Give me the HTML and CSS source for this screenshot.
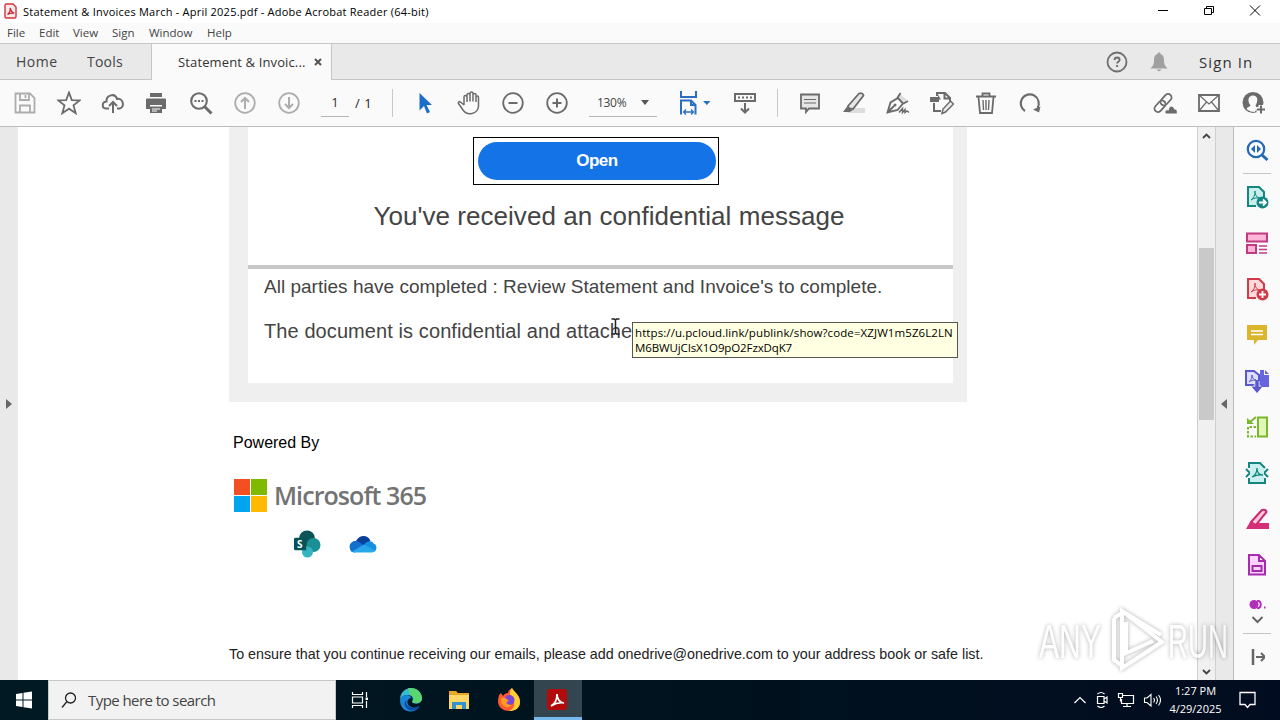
FILE: index.html
```html
<!DOCTYPE html>
<html lang="en">
<head>
  <meta charset="UTF-8">
  <title>Statement &amp; Invoices March - April 2025.pdf - Adobe Acrobat Reader (64-bit)</title>
  <link rel="stylesheet" href="styles.css">
</head>
<body>

  <!-- Title bar -->
  <header class="titlebar">
    <svg class="app-icon" width="13" height="16" viewBox="0 0 13 16"><path d="M1 2.5Q1 1 2.5 1H9l3 3v9.500q0 1.500-1.500 1.500h-8Q1 15 1 13.500z" fill="#fde9e9" stroke="#d2333b" stroke-width="1.400"/><path d="M3.500 11.500C5.500 10 6.500 7.500 6.200 5c1 3.500 2 4.800 4 5.200-2.500-.4-4.500 0-6.700 1.300z" fill="none" stroke="#c9202a" stroke-width="1.200"/></svg>
    <span class="window-title">Statement &amp; Invoices March - April 2025.pdf - Adobe Acrobat Reader (64-bit)</span>
    <div class="window-buttons">
      <svg width="46" height="22" viewBox="0 0 46 22"><path d="M18 10.500h10" stroke="#000"/></svg>
      <svg width="46" height="22" viewBox="0 0 46 22"><path d="M18.500 8.500h7v6h-7zM20.500 8.500v-2h7v6h-2" fill="none" stroke="#000"/></svg>
      <svg width="46" height="22" viewBox="0 0 46 22"><path d="M18 5.500l10 10M28 5.500l-10 10" stroke="#000"/></svg>
    </div>
  </header>

  <nav class="menubar">
    <span class="m-file">File</span><span class="m-edit">Edit</span><span class="m-view">View</span><span class="m-sign">Sign</span><span class="m-window">Window</span><span class="m-help">Help</span>
  </nav>

  <!-- Tabs -->
  <div class="tabbar">
    <span class="tab-home">Home</span>
    <span class="tab-tools">Tools</span>
    <div class="tab-doc"><span>Statement &amp; Invoic...</span>
      <svg width="8" height="8" viewBox="0 0 8 8"><path d="M1 1l6 6M7 1L1 7" stroke="#555" stroke-width="2"/></svg>
    </div>
    <div class="account">
      <svg width="22" height="22" viewBox="0 0 22 22"><circle cx="11" cy="11" r="9.500" fill="none" stroke="#6e6e6e" stroke-width="1.800"/><path d="M8.600 9c0-3.300 5-3.300 5 0 0 1.800-2.500 1.800-2.500 3.500M11.100 14v2" fill="none" stroke="#6e6e6e" stroke-width="1.900"/></svg>
      <svg width="18" height="22" viewBox="0 0 18 22"><path d="M9 1.500c1 0 1.500.6 1.500 1.500C13.500 4 14 6.500 14 10c0 3.500 1.200 5 3.500 7.500H.5C2.800 15 4 13.500 4 10c0-3.500.5-6 3.500-7 0-.9.500-1.500 1.500-1.500zM6.500 18.500h5Q9 22 6.500 18.500z" fill="#a0a0a0"/></svg>
      <span class="sign-in">Sign In</span>
    </div>
  </div>

  <!-- Main toolbar -->
  <div class="toolbar">
    <div class="tools tools-file">
      <svg class="muted" viewBox="0 0 24 24"><path d="M2.500 2.500h14.500l4.500 4.500v14.500h-19zM7 2.500v6.500h9V2.500M12.500 4v3M7 21.500v-7h10v7"/></svg>
      <svg viewBox="0 0 24 24"><path d="M12 1.500l2.800 7.600 7.900.3-6.200 5 2.200 7.800L12 17.700l-6.700 4.500 2.200-7.800-6.200-5 7.900-.3z"/></svg>
      <svg viewBox="0 0 24 24"><path d="M8 17.500H5.500C.5 17.500.5 11 5.500 10.500 5 4 14 1.500 16 8c6-1.500 8.500 8.500 2.500 9.500H16M12 22V11.500M8 15l4-4 4 4" stroke-width="2"/></svg>
      <svg viewBox="0 0 24 24"><path d="M5 2h12v4H5zM1 8.500Q1 7.500 2 7.500h18q1 0 1 1v9.500h-4v-4H5v4H1zM5 15.500h12v6.500H5z" fill="#6b6b6b" stroke="none"/><path d="M7 18h8M7 20h5" stroke="#fff" stroke-width="1"/></svg>
      <svg viewBox="0 0 24 24"><circle cx="10" cy="10" r="7.800" stroke-width="2.100"/><path d="M15.500 15.500l7 7" stroke-width="3"/><path d="M5.500 10h2M9 10h2M12.500 10h2" stroke-width="2"/></svg>
      <svg class="muted" viewBox="0 0 24 24"><circle cx="12" cy="12" r="9.800"/><path d="M12 18V7M8 11l4-4 4 4" stroke-width="2"/></svg>
      <svg class="muted" viewBox="0 0 24 24"><circle cx="12" cy="12" r="9.800"/><path d="M12 6v11M8 13l4 4 4-4" stroke-width="2"/></svg>
    </div>
    <span class="page-field">1</span>
    <span class="page-total">/&nbsp;1</span>
    <i class="divider"></i>
    <div class="tools tools-view">
      <svg viewBox="0 0 24 24"><path d="M6.500 2l12.500 12h-5.500l3.500 7-3 1.500-3-7.500-4.500 4.500z" fill="#1b6fc9" stroke="none"/></svg>
      <svg viewBox="0 0 24 24"><path d="M7 14L3.500 11C2 10 .8 11.500 1.500 12.500L6 19c4 6 15 4.500 15.500-4V6.500c0-2-2.500-2-2.500 0V11 4c0-2-3-2-3 0v6.500V2.500c0-2-3-2-3 0v8V4c0-2-3-2-3 0v7M7 14V6c0-2 3-2 3 0v5" stroke-width="1.500"/></svg>
      <svg viewBox="0 0 24 24"><circle cx="12" cy="12" r="9.800"/><path d="M7.500 12h9" stroke-width="2"/></svg>
      <svg viewBox="0 0 24 24"><circle cx="12" cy="12" r="9.800"/><path d="M7.500 12h9M12 7.500v9" stroke-width="2"/></svg>
    </div>
    <div class="zoom-field"><span>130%</span><svg width="8" height="5" viewBox="0 0 8 5"><path d="M0 0h8L4 5z" fill="#555"/></svg></div>
    <svg class="fit-icon" width="32" height="26" viewBox="0 0 32 26"><path d="M2 1v6h15V1M2 24.500V10.500h10l4.500 4.500v9.500M12 10.500V15h4.500" fill="none" stroke="#2a6fbf" stroke-width="2"/><path d="M4.500 22h10M7 19.500L4.500 22 7 24.500M12 19.500l2.500 2.500-2.500 2.500" fill="none" stroke="#2a6fbf" stroke-width="1.300"/><path d="M24 11h7.500l-3.700 4z" fill="#2a6fbf"/></svg>
    <svg class="scroll-icon" width="24" height="24" viewBox="0 0 24 24"><path d="M2 3h20v7H2zM12 12v9M8 17.500l4 4 4-4" fill="none" stroke="#6b6b6b" stroke-width="2"/><path d="M5 6.500h14" stroke="#6b6b6b" stroke-width="2" stroke-dasharray="2 2"/></svg>
    <i class="divider divider-2"></i>
    <div class="tools">
      <svg viewBox="0 0 24 24"><path d="M3 3.500h18v14H11L8 21v-3.500H3z" fill="#e6e6e6"/><path d="M6 8.500h12M6 12h12" stroke-width="1.200"/></svg>
      <svg viewBox="0 0 24 24"><path d="M9 17h14v5H5z" fill="#ddd" stroke="none"/><path d="M6 15L17 2.500q4-1 4.500 2L11 18l-4-.5z" fill="#e6e6e6"/><path d="M5.500 15l5 4.500-3 1.500H1z" fill="#6b6b6b" stroke="none"/></svg>
      <svg viewBox="0 0 24 24"><path d="M12 6l2-3 7 6-4 3z" fill="#ddd" stroke="none"/><path d="M1.500 21.500l3-10 7.500-4.500 5 5.500-5.500 6.500zM2 21l6-6M11 7.500L14.500 2M17.500 12.500l4.500-2.500" stroke-width="1.900"/><path d="M13 21.500l3.500-4v4l2.500-3v3l2-1.500 2 1.500" stroke-width="1.500"/><circle cx="9" cy="14" r="1.500" fill="#6b6b6b" stroke="none"/></svg>
      <svg viewBox="0 0 24 24"><path d="M7 5V2h8l5 5v3M14.500 2v5.500H20M4 12v8h7" stroke-width="2"/><path d="M0 6h8V3.500l3 5H9V11H0z" fill="#6b6b6b" stroke="none"/><path d="M12 22.500l1-4.500 7.500-8 3 3-8 8z" fill="#eee" stroke-width="1.500"/></svg>
      <svg viewBox="0 0 24 24"><path d="M2 5.500h20M8.500 5V2.500h7V5M4.500 6L6 22h12l1.500-16"/><path d="M9 9l.5 10M12 9v10M15 9l-.5 10" stroke-width="1.400"/></svg>
      <svg viewBox="0 0 24 24"><path d="M7 20A9 9 0 1 1 19.500 17" stroke-width="2.100"/><path d="M22.500 15.500l-1.500 6-6-3z" fill="#6b6b6b" stroke="none"/></svg>
    </div>
    <div class="tools tools-share">
      <svg viewBox="0 0 24 24"><g transform="rotate(-48 10 12)"><rect x="-1" y="8.500" width="13" height="7" rx="3.500"/><rect x="8" y="8.500" width="13" height="7" rx="3.500"/></g><path d="M12.500 23c-2-4 2-4.500 3-4 0-5 5-5 6-1 3.500 0 3.500 5 1.500 5z" fill="#6b6b6b" stroke="#fafafa" stroke-width="1"/></svg>
      <svg viewBox="0 0 24 24"><path d="M2 4h20v16H2z"/><path d="M2 4l10 9 10-9M2 20l7.500-9M22 20l-7.500-9" stroke-width="1.200"/></svg>
      <svg viewBox="0 0 24 24"><circle cx="12" cy="11.500" r="10.500" fill="#6b6b6b" stroke="none"/><path d="M6 18.500c-1-2.500 3-2.500 3.500-4C6 10 7 4.500 12 4.500S17.500 10 14.500 14.500c.5 1.500 2 2 2 3l-3 3.500q-4 0-7.500-2.500z" fill="#fafafa" stroke="none"/><path d="M20 14v9M15.500 18.500h8.500" stroke="#fafafa" stroke-width="5"/><path d="M20 14.500v8M16 18.500h8" stroke-width="2"/></svg>
    </div>
  </div>

  <main class="workspace">
    <aside class="left-pane"><i class="tri tri-right"></i></aside>

    <!-- Document page -->
    <section class="page">
      <div class="mail-frame">
        <div class="mail-card">
          <div class="mail-head">
            <div class="button-frame"><span class="open-button">Open</span></div>
            <h1>You've received an confidential message</h1>
          </div>
          <p class="line-1">All parties have completed : Review Statement and Invoice's to complete.</p>
          <p class="line-2">The document is confidential and attached</p>
        </div>
      </div>
      <p class="powered">Powered By</p>
      <div class="ms-logo">
        <div class="ms-squares"><i class="red"></i><i class="green"></i><i class="blue"></i><i class="yellow"></i></div>
        <span>Microsoft 365</span>
      </div>
      <div class="service-icons">
        <svg width="28" height="28" viewBox="0 0 28 28"><circle cx="14" cy="8.500" r="8" fill="#0b5558"/><circle cx="20.500" cy="15" r="7" fill="#1a8f96"/><circle cx="14.500" cy="22" r="5.500" fill="#35b5c0"/><path d="M2 7.500h11.500v13H2z" fill="#034f52" opacity=".5"/><rect x="1" y="8" width="12" height="12" rx="1" fill="#045457"/><text x="4" y="17.500" class="sp-letter">S</text></svg>
        <svg width="28" height="18" viewBox="0 0 28 18"><path d="M7 6C10-.5 19-1 21.500 6L14 12z" fill="#0a3f9c"/><path d="M1 14c-2-6 4-9 8-7.500l9 5.500-12 5.500c-3 0-4.500-1-5-3.500z" fill="#1370cf"/><path d="M15 9.500c3-4 8-4.500 9.500-1 4 1 4 8-.5 8.500z" fill="#1490df"/><path d="M3 16.500L15 9.500l11 6c-1 1.500-2 2-4 2H6.500q-2 0-3.500-1z" fill="#28a8ea"/></svg>
      </div>
      <p class="footer-note">To ensure that you continue receiving our emails, please add onedrive@onedrive.com to your address book or safe list.</p>
    </section>

    <div class="scrollbar">
      <svg width="9" height="6" viewBox="0 0 9 6"><path d="M1 5l3.500-3.500L8 5" fill="none" stroke="#444" stroke-width="1.800"/></svg>
      <div class="thumb"></div>
      <svg width="9" height="6" viewBox="0 0 9 6"><path d="M1 1l3.500 3.500L8 1" fill="none" stroke="#444" stroke-width="1.800"/></svg>
    </div>
    <div class="right-pane"><i class="tri tri-left"></i></div>

    <!-- Tools rail -->
    <aside class="rail">
      <svg class="first" viewBox="0 0 24 24"><circle cx="11" cy="11" r="8.200" stroke="#2468b8" stroke-width="2.200"/><path d="M17 17l5.500 5" stroke="#2468b8" stroke-width="3"/><path d="M10 7v8l-4-4zM12 7v8l4-4z" fill="#2468b8"/></svg>
      <i class="rail-line"></i>
      <div class="rail-tools">
        <svg viewBox="0 0 24 24"><path d="M11 21H3V2h11l5 5v5" fill="#c9efec" stroke="#14867f" stroke-width="2"/><path d="M6 15c3-2 4-5 4-9 0 4 2 7 5 7-4-.5-6 0-9 2z" stroke="#14867f"/><circle cx="17.500" cy="17.500" r="6" fill="#14867f"/><path d="M14 17.500h6.500M18 14.500l3 3-3 3" stroke="#fff" stroke-width="1.800"/></svg>
        <svg viewBox="0 0 24 24"><path d="M2 2.500h20v8H2zM2 14h9v8H2z" fill="#ffb5d7" stroke="#c23a80" stroke-width="2"/><path d="M14 15h8M14 18.500h8M14 22h8" stroke="#c23a80" stroke-width="1.500"/></svg>
        <svg viewBox="0 0 24 24"><path d="M11 21H3V2h11l5 5v5" fill="#ffdada" stroke="#d13b49" stroke-width="2"/><path d="M6 15c3-2 4-5 4-9 0 4 2 7 5 7-4-.5-6 0-9 2z" stroke="#d13b49"/><circle cx="17.500" cy="17.500" r="6" fill="#d13b49"/><path d="M14 17.500h7M17.500 14v7" stroke="#fff" stroke-width="1.800"/></svg>
        <svg viewBox="0 0 24 24"><path d="M2 2h20v15h-9l-4 5v-5H2z" fill="#dbb52b"/><path d="M6 8h12M6 11.500h12" stroke="#fff" stroke-width="1.700"/></svg>
        <svg viewBox="0 0 24 24"><path d="M1 2h8l5 4v10H1z" fill="#dedeff" stroke="#5a58cf" stroke-width="2"/><path d="M15 1h4v5h5v12h-9z" fill="#6765de"/><path d="M20 1l4 4h-4z" fill="#6765de"/><path d="M4 13c2-2 3-4 3-7 0 3 2 5 4 5-3 0-5 .5-7 2z" stroke="#5a58cf"/><path d="M12 12v10M7 18l5 5 5-5" stroke="#fafafa" stroke-width="5"/><path d="M12 11v11" stroke="#5a58cf" stroke-width="3.500"/><path d="M6.500 17.500h11L12 24z" fill="#5a58cf"/></svg>
        <svg viewBox="0 0 24 24"><path d="M13 2.500h9v19h-9z" fill="#e1f8ba" stroke="#79b82a" stroke-width="2"/><path d="M11 12H3v9.500h8" stroke="#79b82a" stroke-width="2" stroke-dasharray="2.500 1.500"/><path d="M11 2L5 7" stroke="#79b82a" stroke-width="2"/><path d="M2 3v6h7z" fill="#79b82a"/></svg>
        <svg viewBox="0 0 24 24"><path d="M1 8l4 4-4 4M23 8l-4 4 4 4" stroke="#14867f" stroke-width="2"/><path d="M5 3h10l4 4v14H5z" fill="#c9f0ef"/><path d="M4 7V2h11l5 5M4 17v5h16v-5" stroke="#14867f" stroke-width="2"/><path d="M7 16c4-2 5-5 5-9 0 4 2 7 6 7-5-.5-7 0-11 2z" stroke="#14867f" stroke-width="1.300"/></svg>
        <svg viewBox="0 0 24 24"><path d="M12 16h12v6H6z" fill="#d52d78"/><path d="M6 15L17 3q4-1 4.500 2L11 18z" fill="#ffcbe0" stroke="#cf286f" stroke-width="2"/><path d="M5 15l6 4-2 3H1z" fill="#d52d78"/></svg>
        <svg viewBox="0 0 24 24"><path d="M4 2h10l6 6v13.500H4zM14 2v6h6M7.500 13h9v5h-9z" fill="#fbd3ff" stroke="#a62bad" stroke-width="2"/></svg>
      </div>
      <svg class="clipped" width="18" height="9" viewBox="0 0 18 9"><circle cx="6" cy="4.500" r="4.500" fill="#b130bd"/><path d="M9 .8c5 0 5 7.500 0 7.500M16 7.500h1.500" stroke="#b130bd" stroke-width="2"/></svg>
      <svg class="more" width="13" height="8" viewBox="0 0 13 8"><path d="M1.500 1l5 5 5-5" stroke="#666" stroke-width="2"/></svg>
      <i class="rail-line"></i>
      <svg class="collapse" width="16" height="16" viewBox="0 0 16 16"><path d="M4 0v16" stroke="#666" stroke-width="2.500"/><path d="M7 8h8M12 4l4 4-4 4" stroke="#666" stroke-width="2"/></svg>
    </aside>

    <div class="tooltip"><span>https://u.pcloud.link/publink/show?code=XZJW1m5Z6L2LN</span><span class="tail">M6BWUjCIsX1O9pO2FzxDqK7</span></div>
    <svg class="text-cursor" width="9" height="17" viewBox="0 0 9 17"><path d="M.5 1h3l1 1 1-1h3M.5 16h3l1-1 1 1h3M4.500 2v13" fill="none" stroke="#222" stroke-width="1.500"/></svg>
    <svg class="watermark" width="200" height="68" viewBox="0 0 200 68">
      <g class="wm-text"><text x="4" y="52" textLength="62" lengthAdjust="spacingAndGlyphs">ANY</text><text x="133" y="52" textLength="60" lengthAdjust="spacingAndGlyphs">RUN</text></g>
      <path d="M79 12v42l7 5M87 5v57l40-26zM87 5l39 24M91 16v31l27-12M79 12l8-5" class="wm-mark"/>
    </svg>
  </main>

  <!-- Windows taskbar -->
  <footer class="taskbar">
    <svg class="start" width="48" height="40" viewBox="0 0 48 40"><path d="M16 14l6.500-1v6.500H16zM23.500 12.800L32 11.500v8h-8.500zM16 20.500h6.500V27L16 26zM23.500 20.500H32v8l-8.500-1.300z" fill="#fff"/></svg>
    <div class="search"><svg width="16" height="17" viewBox="0 0 16 17"><circle cx="9.500" cy="6" r="5" fill="none" stroke="#222" stroke-width="1.300"/><path d="M6 9.500L1 15.500" stroke="#222" stroke-width="1.300"/></svg><span>Type here to search</span></div>
    <svg class="task" viewBox="0 0 48 40"><path d="M16.500 12v2.500h10V12M16.500 28v-2.500h10V28M16.500 17h10v6h-10z" fill="none" stroke="#fff" stroke-width="1.200"/><path d="M30.500 12v5M30.500 21v7" stroke="#fff" stroke-width="1.200"/><path d="M29.500 17.500h2.500v2.500h-2.500z" fill="#fff"/></svg>
    <svg class="task" viewBox="0 0 48 40"><path d="M14 20C14 4.500 35 4 36 18c0 6-7 7-10 4 2-4 0-7-4-7-4 0-7 2-8 5z" fill="#38b9d6"/><path d="M22 8.200c8-1.500 14 4 14 10.300 0 5-7 5.500-10 3.500 3-3 1-6-2-7z" fill="#59d66e"/><path d="M14 20c2-6 10-6.500 11.500-2-5 0-6 7 .5 9.500 3 1 5 0 7.500-1.500C29 35 14 33 14 20z" fill="#1a86d8"/><path d="M20.500 20c-2 6 5 10 13 6-3 6-12 6-14.500 0-1-3 0-5 1.500-6z" fill="#0d4da3"/></svg>
    <svg class="task" viewBox="0 0 48 40"><path d="M14 11h7l2 2h11v16H14z" fill="#e6a72b"/><path d="M14 15h20v14H14z" fill="#ffd766"/><path d="M17 22h14v7h-4v-4h-6v4h-4z" fill="#3193d0"/></svg>
    <svg class="task" viewBox="0 0 48 40"><path d="M27 8c0 4 8 6 8 14 0 12-21 12-22 0 0-5 1-8 3-9l2 3c1-2 3-3 5-3 0-2 2-4 4-5z" fill="#ff5a32"/><path d="M27 8c3 5 8 7 8 14 0 7-6 9-11 9 7-3 7-11 1-16 0-3 0-5 2-7z" fill="#ffce32"/><circle cx="24.500" cy="20" r="5" fill="#7847d5"/><path d="M16 18c4-1 6 1 8 3-3 0-4 4 3 4-5 5-12 1-11-7z" fill="#ff9b20"/></svg>
    <div class="task task-active"><svg width="48" height="37" viewBox="0 0 48 37"><rect x="13" y="9" width="20" height="21" rx="3" fill="#b30b0b"/><path d="M17 26c4-2 6-6 6-12 0 5 3 9 7 9-5-1-8 0-13 3z" fill="none" stroke="#fff" stroke-width="1.700"/></svg></div>
    <div class="tray">
      <svg width="14" height="20" viewBox="0 0 14 20"><path d="M1.500 13L7 7.500l5.500 5.500" fill="none" stroke="#fff" stroke-width="1.200"/></svg>
      <svg width="14" height="20" viewBox="0 0 14 20"><path d="M2.500 6.500h6.500v7H2.500zM9 9l3-2v6L9 11M2.500 4q3.500-3 7 0M2.500 16q3.500 3 7 0" fill="none" stroke="#fff" stroke-width="1.200"/></svg>
      <svg width="18" height="20" viewBox="0 0 18 20"><path d="M6 5.500h10.500v8h-12V9M10 13.500v3M6 16.500h8M1.500 3.500h4v4h-4zM3.500 7.500v4" fill="none" stroke="#fff" stroke-width="1.200"/></svg>
      <svg width="18" height="20" viewBox="0 0 18 20"><path d="M1.500 8v4.500h2.500l4 3.500V4.500L4 8zM10.500 8q2 2.300 0 4.500M13 6.500q3 3.700 0 7.500M15.500 5q4 5 0 10.500" fill="none" stroke="#fff" stroke-width="1.100"/></svg>
    </div>
    <div class="clock"><span>1:27 PM</span><span class="date">4/29/2025</span></div>
    <svg class="notify" width="17" height="18" viewBox="0 0 17 18"><path d="M1 1.500h15v12h-5l-2.500 3-2.500-3H1z" fill="none" stroke="#fff" stroke-width="1.300"/></svg>
  </footer>

</body>
</html>
```
FILE: styles.css
```css
* {
  box-sizing: border-box;
}

body {
  margin: 0;
  width: 1280px;
  height: 720px;
  overflow: hidden;
  display: flex;
  flex-direction: column;
  font-family: "Open Sans", "Noto Sans", sans-serif;
  background: #fff;
  color: #444;
}

svg {
  display: block;
  flex: none;
}

p, h1 {
  margin: 0;
  white-space: nowrap;
}

/* Title and menu */
.titlebar {
  display: flex;
  height: 23px;
  padding-left: 4px;
}

.app-icon {
  margin-top: 3px;
}

.window-title {
  margin-left: 6px;
  font-size: 11px;
  letter-spacing: 0.230px;
  line-height: 23px;
  color: #000;
  white-space: nowrap;
}

.window-buttons {
  display: flex;
  margin-left: auto;
  margin-right: 2px;
}

.menubar {
  display: flex;
  height: 20px;
  padding-left: 7px;
  background: #fafafa;
  font-size: 11.500px;
  line-height: 20px;
}

.m-file { width: 32px; }
.m-edit { width: 34px; }
.m-view { width: 39px; }
.m-sign { width: 37px; }
.m-window { width: 58px; }

/* Tabs */
.tabbar {
  display: flex;
  height: 37px;
  background: #e9e9e9;
  border-top: 1px solid #c6c6c6;
  border-bottom: 1px solid #c6c6c6;
  font-size: 14px;
  letter-spacing: 0.500px;
  line-height: 36px;
}

.tab-home {
  width: 71px;
  margin-left: 16px;
}

.tab-tools {
  width: 64px;
  letter-spacing: 0.200px;
}

.tab-doc {
  display: flex;
  align-items: center;
  width: 181px;
  height: 36px;
  padding-left: 26px;
  background: #fafafa;
  border: solid #c6c6c6;
  border-width: 0 1px;
  font-size: 13px;
  letter-spacing: 0.130px;
  color: #333;
}

.tab-doc span {
  width: 136px;
}

.account {
  display: flex;
  align-items: center;
  margin-left: auto;
  margin-right: 25px;
}

.account svg + svg {
  margin-left: 22px;
}

.sign-in {
  width: 56px;
  margin-left: 31px;
  font-size: 15px;
  letter-spacing: 1.100px;
  color: #333;
  white-space: nowrap;
}

/* Toolbar */
.toolbar {
  display: flex;
  align-items: center;
  height: 47px;
  padding-left: 3px;
  padding-right: 5px;
  background: #fafafa;
  border-bottom: 1px solid #bdbdbd;
}

.tools {
  display: flex;
}

.tools svg {
  width: 24px;
  height: 24px;
  margin: 0 10px;
  fill: none;
  stroke: #6b6b6b;
  stroke-width: 1.800;
}

.tools .muted {
  stroke: #adadad;
}

.page-field {
  width: 28px;
  height: 28px;
  margin-left: 10px;
  border-bottom: 1px solid #b5b5b5;
  font-size: 13px;
  line-height: 27px;
  text-align: center;
  color: #333;
}

.page-total {
  width: 37px;
  margin-left: 6px;
  font-size: 13px;
  letter-spacing: 0.500px;
  color: #222;
}

.divider {
  width: 1px;
  height: 28px;
  background: #c8c8c8;
}

.tools-view {
  margin-left: 10px;
}

.zoom-field {
  display: flex;
  align-items: center;
  width: 68px;
  height: 28px;
  margin-left: 10px;
  padding-left: 8px;
  border-bottom: 1px solid #b5b5b5;
  font-size: 12px;
  letter-spacing: -0.300px;
}

.zoom-field span {
  width: 44px;
}

.fit-icon {
  margin-left: 22px;
}

.scroll-icon {
  margin-left: 22px;
}

.divider-2 {
  margin: 0 10px 0 20px;
}

.tools-share {
  margin-left: auto;
}

/* Workspace */
.workspace {
  display: flex;
  position: relative;
  height: 553px;
}

.left-pane {
  display: flex;
  align-items: center;
  width: 18px;
  padding-left: 6px;
  background: #e9e9e9;
}

.tri {
  width: 0;
  height: 0;
  border: 5px solid transparent;
}

.tri-right {
  border-left: 6px solid #666;
  border-right: 0;
}

.tri-left {
  border-right: 6px solid #666;
  border-left: 0;
}

.page {
  width: 1179px;
  padding-left: 211px;
  background: #fff;
  font-family: "Liberation Sans", Arial, sans-serif;
}

.mail-frame {
  width: 738px;
  height: 275px;
  padding: 0 14px 19px 19px;
  background: #efefef;
}

.mail-card {
  height: 256px;
  background: #fff;
}

.mail-head {
  display: flex;
  flex-direction: column;
  align-items: center;
  height: 142px;
  padding-top: 10px;
  border-bottom: 4px solid #c8c8c8;
}

.button-frame {
  width: 246px;
  height: 48px;
  margin-right: 9px;
  padding: 4px 2px 4px 4px;
  border: 1px solid #000;
}

.open-button {
  display: block;
  height: 38px;
  border-radius: 19px;
  background: #1473e6;
  color: #fff;
  font-size: 17px;
  font-weight: bold;
  letter-spacing: -0.500px;
  line-height: 37px;
  text-align: center;
}

.mail-head h1 {
  margin-top: 16px;
  margin-right: -17px;
  font-size: 26px;
  font-weight: normal;
  letter-spacing: 0.040px;
  line-height: 30px;
}

.line-1,
.line-2 {
  padding-left: 16px;
  font-size: 19px;
  letter-spacing: 0.015px;
  line-height: 24px;
}

.line-1 {
  margin-top: 6px;
}

.line-2 {
  margin-top: 20px;
  font-size: 20px;
  letter-spacing: 0.090px;
}

.powered {
  margin-top: 31px;
  padding-left: 4px;
  font-size: 16px;
  line-height: 20px;
  color: #000;
}

.ms-logo {
  display: flex;
  align-items: center;
  height: 34px;
  margin-top: 25px;
  padding-left: 5px;
}

.ms-logo span {
  margin-left: 7px;
  font-family: "Open Sans", sans-serif;
  font-size: 25px;
  font-weight: 600;
  letter-spacing: -0.930px;
  color: #737373;
}

.ms-squares {
  display: grid;
  grid-template-columns: 16px 16px;
  grid-template-rows: 16px 16px;
  gap: 1px;
}

.red { background: #f25022; }
.green { background: #7fba00; }
.blue { background: #00a4ef; }
.yellow { background: #ffb900; }

.service-icons {
  display: flex;
  align-items: center;
  gap: 28px;
  margin-top: 18px;
  padding-left: 64px;
}

.sp-letter {
  font: bold 10px "Open Sans", sans-serif;
  fill: #fff;
}

.footer-note {
  margin-top: 86px;
  font-size: 14.310px;
  line-height: 20px;
  color: #222;
}

.scrollbar {
  display: flex;
  flex-direction: column;
  align-items: center;
  width: 19px;
  padding: 6px 0 5px;
  background: #f0f0f0;
  border: solid #cfcfcf;
  border-width: 0 1px;
}

.thumb {
  width: 15px;
  height: 172px;
  margin-top: 109px;
  margin-bottom: auto;
  background: #c9c9c9;
}

.right-pane {
  display: flex;
  align-items: center;
  width: 18px;
  padding-left: 5px;
  background: #e9e9e9;
  border-right: 1px solid #bdbdbd;
}

/* Tools rail */
.rail {
  display: flex;
  flex-direction: column;
  align-items: center;
  width: 46px;
  background: #fafafa;
}

.rail svg {
  fill: none;
}

.rail .first,
.rail-tools svg {
  width: 24px;
  height: 24px;
}

.rail .first {
  margin: 11px 0;
}

.rail-line {
  width: 28px;
  height: 1px;
  background: #c4c4c4;
}

.rail-tools {
  display: flex;
  flex-direction: column;
  gap: 22px;
  margin-top: 11px;
}

.clipped {
  margin-top: 23px;
}

.more {
  margin: 7px 0 9px;
}

.collapse {
  margin-top: 15px;
}

.tooltip {
  position: absolute;
  left: 632px;
  top: 195px;
  width: 326px;
  height: 36px;
  padding: 2px;
  background: #ffffe1;
  border: 1px solid #555;
  color: #000;
  font-size: 11.500px;
  letter-spacing: 0.090px;
  line-height: 15px;
  white-space: nowrap;
}

.tooltip span {
  display: block;
}

.tooltip .tail {
  letter-spacing: -0.120px;
}

.text-cursor {
  position: absolute;
  left: 611px;
  top: 191px;
}

.watermark {
  position: absolute;
  left: 1035px;
  top: 479px;
  filter: drop-shadow(0 0 2px rgba(0, 0, 0, 0.45));
  opacity: 0.7;
}

.wm-text {
  font-family: "Liberation Sans", sans-serif;
  font-size: 48px;
  fill: #fff;
}

.wm-mark {
  fill: none;
  stroke: #fff;
  stroke-width: 4;
}

/* Taskbar */
.taskbar {
  display: flex;
  align-items: center;
  height: 40px;
  background: linear-gradient(90deg, #001923, #00131e 50%, #020c20);
}

.search {
  display: flex;
  align-items: center;
  width: 288px;
  height: 40px;
  padding-left: 12px;
  background: #f2f2f2;
  border: 1px solid #c8c8c8;
  font-size: 15px;
  letter-spacing: -0.560px;
  color: #444;
}

.search span {
  margin-left: 11px;
}

.task {
  width: 48px;
  height: 40px;
}

.task + .task {
  margin-left: 1.500px;
}

.task-active {
  background: #33454f;
  border-bottom: 3px solid #76b9ed;
}

.tray {
  display: flex;
  gap: 8px;
  margin-left: auto;
}

.clock {
  display: flex;
  flex-direction: column;
  align-items: center;
  width: 53px;
  margin-left: 8px;
  font-size: 11px;
  line-height: 18px;
  color: #fff;
  white-space: nowrap;
}

.notify {
  margin-left: 17px;
  margin-right: 24px;
}
```
